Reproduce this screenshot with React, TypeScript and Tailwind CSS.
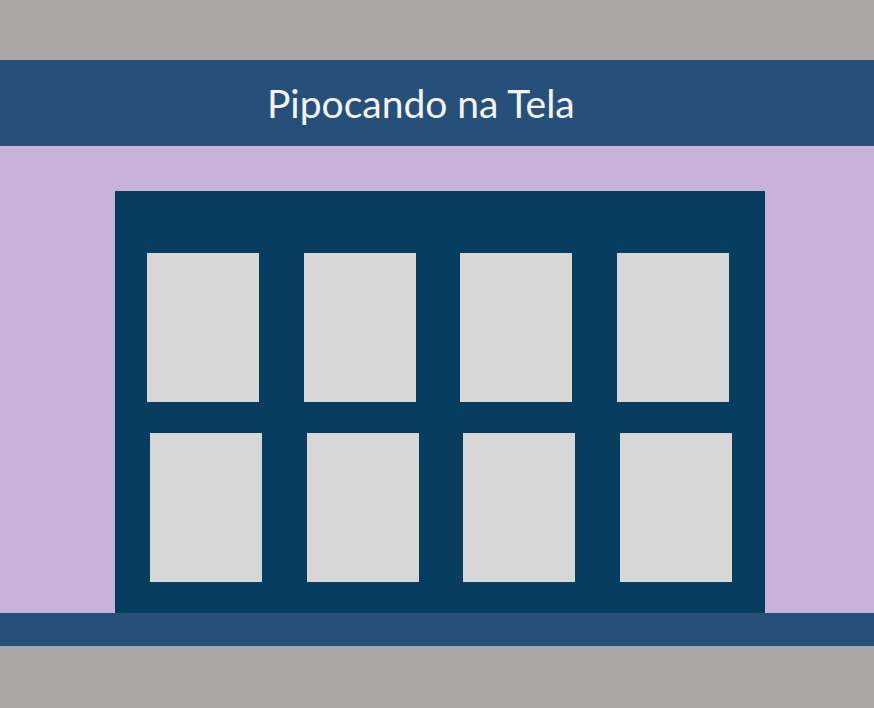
export default function App() {
  const rowOne = [0, 1, 2, 3]
  const rowTwo = [0, 1, 2, 3]

  return (
    <div className="min-h-[708px] bg-[#a9a6a5] pt-[60px] pb-[62px]">
      <header className="flex h-[86px] items-center bg-[#26507a] pl-[267px]">
        <h1 className="text-[39px] leading-none text-[#f4f4f4]" style={{ fontFamily: 'Lato, "Liberation Sans", sans-serif' }}>
          Pipocando na Tela
        </h1>
      </header>

      <main className="bg-[#c8b2d9] pt-[45px] pl-[115px]">
        <section className="flex w-[650px] flex-col gap-[31px] bg-[#073d5f] pt-[62px] pb-[31px] pl-[32px]">
          <div className="flex gap-[44.6px]">
            {rowOne.map((i) => (
              <div key={i} className="h-[149px] w-[112px] bg-[#d7d7d7]" />
            ))}
          </div>
          <div className="ml-[3px] flex gap-[44.6px]">
            {rowTwo.map((i) => (
              <div key={i} className="h-[149px] w-[112px] bg-[#d7d7d7]" />
            ))}
          </div>
        </section>
      </main>

      <footer className="h-[33px] bg-[#26507a]" />
    </div>
  )
}
